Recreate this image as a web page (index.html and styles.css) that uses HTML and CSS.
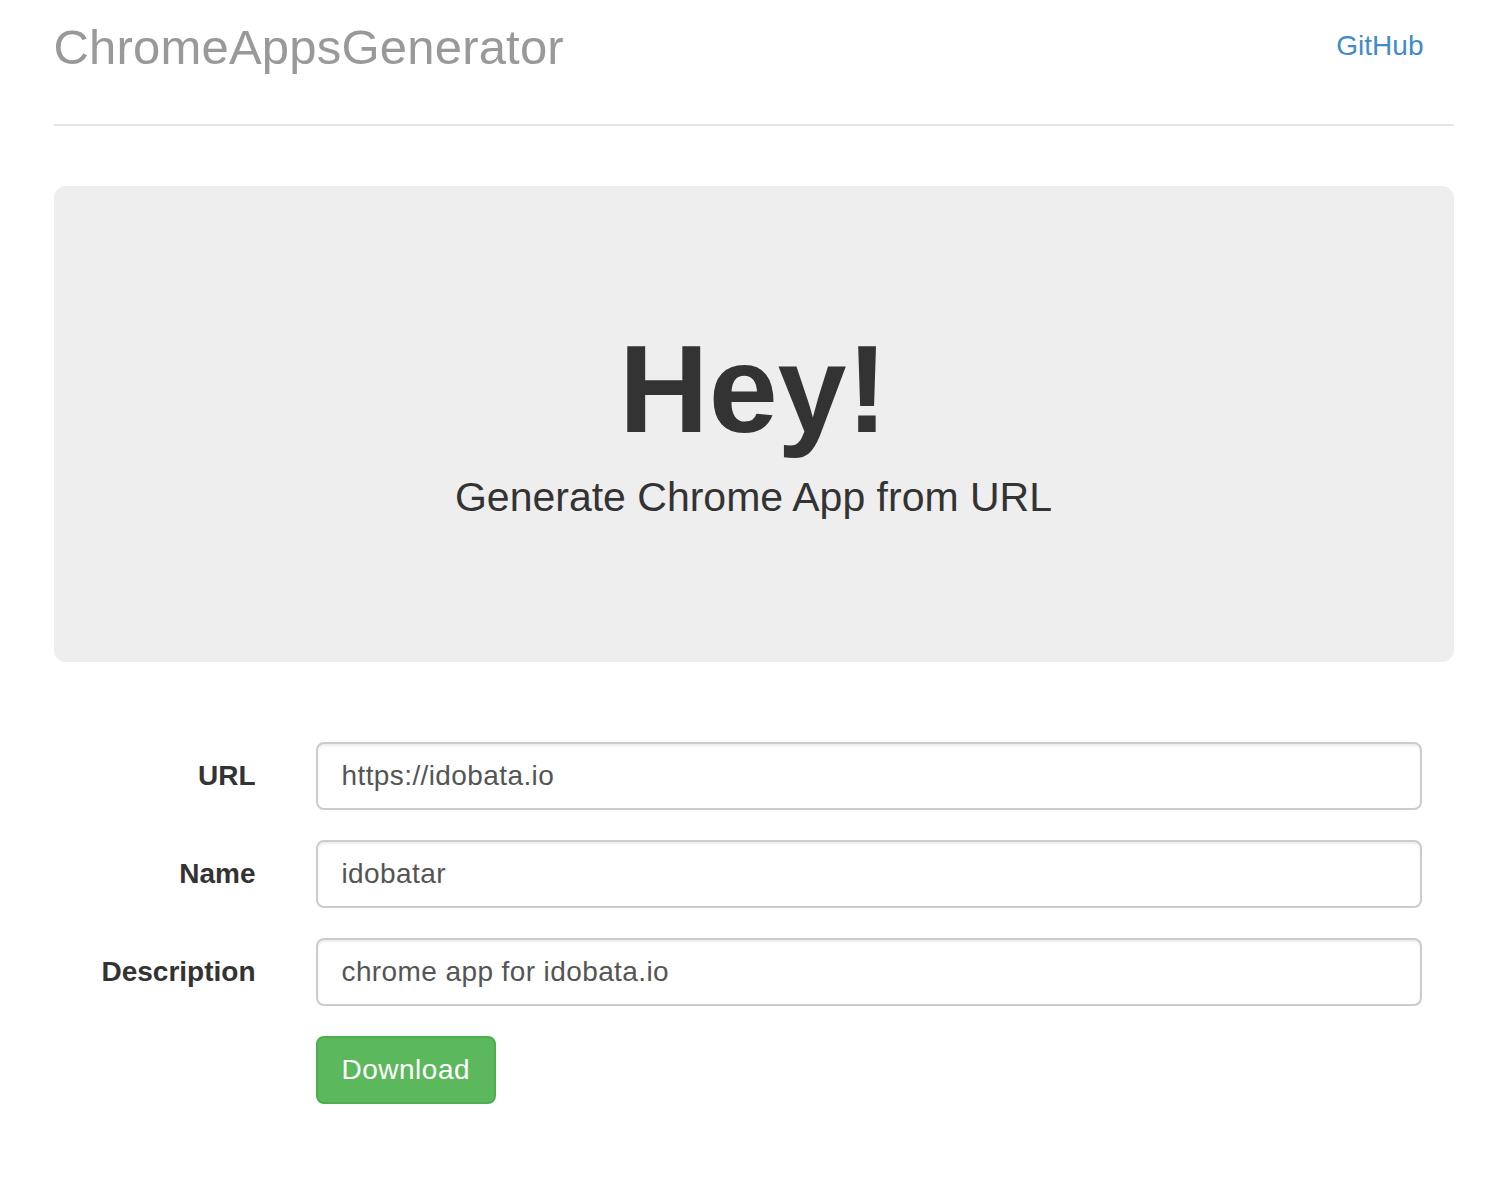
FILE: index.html
```html
<!DOCTYPE html>
<html lang="en">
<head>
<meta charset="utf-8">
<title>ChromeAppsGenerator</title>
<link rel="stylesheet" href="styles.css">
</head>
<body>
<div class="container">
  <header class="header">
    <h3 class="brand">ChromeAppsGenerator</h3>
    <nav class="nav">
      <a class="nav-link" href="#">GitHub</a>
    </nav>
  </header>

  <section class="jumbotron">
    <h1 class="jumbo-title">Hey!</h1>
    <p class="jumbo-lead">Generate Chrome App from URL</p>
  </section>

  <form class="form">
    <div class="form-group">
      <label class="form-label" for="url">URL</label>
      <input class="form-input" id="url" type="text" value="https://idobata.io">
    </div>
    <div class="form-group">
      <label class="form-label" for="name">Name</label>
      <input class="form-input" id="name" type="text" value="idobatar">
    </div>
    <div class="form-group">
      <label class="form-label" for="desc">Description</label>
      <input class="form-input" id="desc" type="text" value="chrome app for idobata.io">
    </div>
    <div class="form-group">
      <span class="form-spacer"></span>
      <div class="form-actions">
        <button class="btn-success" type="button">Download</button>
      </div>
    </div>
  </form>
</div>
</body>
</html>
```

FILE: styles.css
```css
html, body {
  margin: 0;
  padding: 0;
  background: #fff;
}

body {
  font-family: "Liberation Sans", Arial, Helvetica, sans-serif;
  color: #333;
}

.container {
  width: 1400px;
  margin: 0 auto;
  padding-left: 1px;
}

.header {
  display: flex;
  justify-content: space-between;
  align-items: flex-start;
  padding-top: 7px;
  padding-bottom: 37px;
  border-bottom: 2px solid #e5e5e5;
}

.brand {
  margin: 0;
  font-size: 49px;
  line-height: 80px;
  font-weight: 400;
  letter-spacing: 0.2px;
  color: #999;
}

.nav-link {
  display: block;
  padding: 19px 30px 0;
  font-size: 28px;
  line-height: 40px;
  color: #428bca;
  text-decoration: none;
}

.jumbotron {
  margin: 60px 0 80px;
  padding: 96px 60px;
  background: #eee;
  border-radius: 12px;
  text-align: center;
}

.jumbo-title {
  margin: 40px 0 11px;
  font-size: 124px;
  line-height: 134px;
  font-weight: 700;
  color: #333;
}

.jumbo-lead {
  margin: 0 0 39px;
  font-size: 41px;
  line-height: 60px;
  font-weight: 400;
  color: #333;
}

.form {
  margin: 0;
}

.form-group {
  display: grid;
  grid-template-columns: 202px 1106px;
  column-gap: 60px;
  margin-bottom: 30px;
}

.form-label {
  display: block;
  padding-top: 14px;
  font-size: 28px;
  line-height: 40px;
  font-weight: 700;
  text-align: right;
  color: #333;
}

.form-input {
  box-sizing: border-box;
  display: block;
  width: 100%;
  height: 68px;
  margin: 0;
  padding: 0 24px;
  font-family: "Liberation Sans", Arial, Helvetica, sans-serif;
  font-size: 28px;
  letter-spacing: 0.4px;
  color: #555;
  background: #fff;
  border: 2px solid #ccc;
  border-radius: 8px;
  box-shadow: inset 0 2px 2px rgba(0, 0, 0, 0.075);
  outline: none;
}

.btn-success {
  box-sizing: border-box;
  height: 68px;
  padding: 0 24px;
  font-family: "Liberation Sans", Arial, Helvetica, sans-serif;
  font-size: 28px;
  letter-spacing: 0.5px;
  color: #fff;
  background: #5cb85c;
  border: 2px solid #4cae4c;
  border-radius: 8px;
  cursor: pointer;
}
```
